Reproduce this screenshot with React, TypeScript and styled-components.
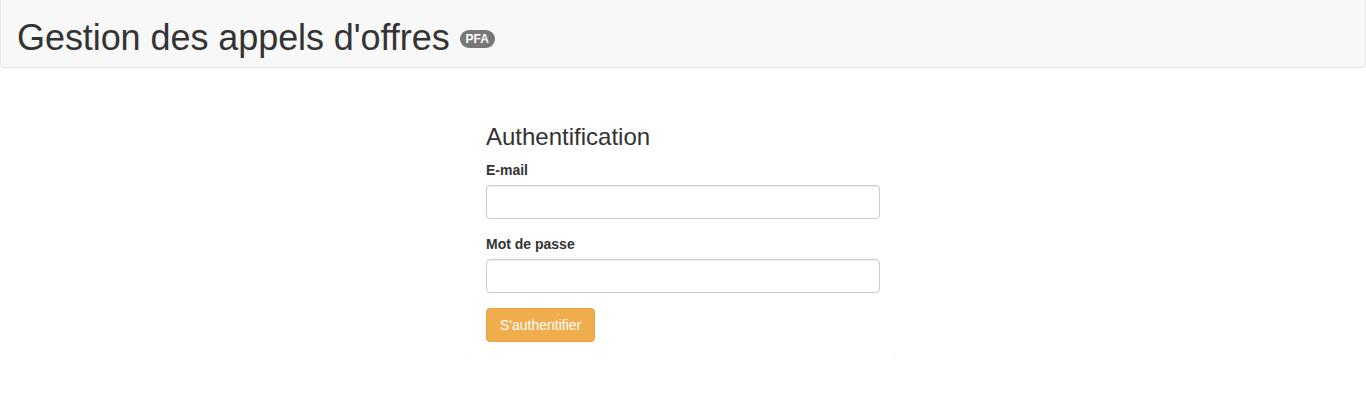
import styled, { createGlobalStyle } from "styled-components"

const GlobalStyle = createGlobalStyle`
	* {
		box-sizing: border-box;
	}

	body {
		margin: 0;
		background: #fff;
		color: #333;
		font-family: "Liberation Sans", Arial, sans-serif;
		font-size: 14px;
		line-height: 1.42857143;
	}
`

const App: React.FC = () => {
	return (
		<>
			<GlobalStyle />
			<Header>
				<Title>
					Gestion des appels d'offres <Badge>PFA</Badge>
				</Title>
			</Header>

			<Main>
				<Panel>
					<PanelBody>
						<PanelTitle>Authentification</PanelTitle>
						<form onSubmit={(e) => e.preventDefault()}>
							<FormGroup>
								<Label htmlFor="email">E-mail</Label>
								<Input id="email" type="email" />
							</FormGroup>
							<FormGroup>
								<Label htmlFor="password">Mot de passe</Label>
								<Input id="password" type="password" />
							</FormGroup>
							<Button type="submit">S'authentifier</Button>
						</form>
					</PanelBody>
				</Panel>
			</Main>
		</>
	)
}

export default App

const Header = styled.header`
	background-color: #f8f8f8;
	border: 1px solid #e7e7e7;
	border-top: none;
	border-radius: 0 0 4px 4px;
	padding: 0 16px;
	height: 68px;
	margin-bottom: 20px;
	overflow: hidden;
`

const Title = styled.h1`
	margin: 18px 0 10px;
	font-size: 36px;
	font-weight: 500;
	line-height: 1.1;
	letter-spacing: -0.07px;
	color: #333;
`

const Badge = styled.span`
	display: inline-block;
	vertical-align: middle;
	min-width: 10px;
	padding: 3px 6px;
	font-size: 12px;
	font-weight: bold;
	line-height: 1;
	letter-spacing: 0;
	color: #fff;
	text-align: center;
	white-space: nowrap;
	background-color: #777;
	border-radius: 10px;
	position: relative;
	top: -1px;
`

const Main = styled.main`
	display: flex;
	justify-content: center;
`

const Panel = styled.section`
	width: 424px;
	background-color: #fff;
	border: 1px solid transparent;
	border-radius: 4px;
	box-shadow: 0 1px 1px rgba(0, 0, 0, 0.07);
`

const PanelBody = styled.div`
	padding: 15px 14px;
`

const PanelTitle = styled.h3`
	margin: 20px 0 10px;
	font-size: 24px;
	font-weight: 500;
	line-height: 1.1;
`

const FormGroup = styled.div`
	margin-bottom: 15px;
`

const Label = styled.label`
	display: inline-block;
	max-width: 100%;
	margin-bottom: 5px;
	font-weight: bold;
`

const Input = styled.input`
	display: block;
	width: 100%;
	height: 34px;
	padding: 6px 12px;
	font-family: inherit;
	font-size: 14px;
	color: #555;
	background-color: #fff;
	border: 1px solid #ccc;
	border-radius: 4px;
	box-shadow: inset 0 1px 1px rgba(0, 0, 0, 0.075);
	outline: none;
`

const Button = styled.button`
	display: inline-block;
	padding: 6px 13px;
	font-family: inherit;
	font-size: 14px;
	line-height: 1.42857143;
	color: #fff;
	background-color: #f0ad4e;
	border: 1px solid #eea236;
	border-radius: 4px;
	cursor: pointer;
`
